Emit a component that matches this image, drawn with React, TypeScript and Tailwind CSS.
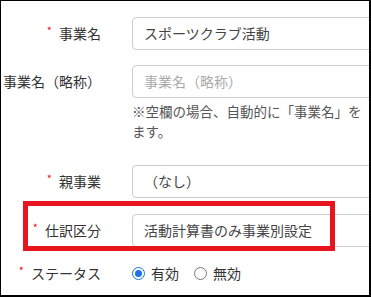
import React from "react";

const font = { fontFamily: '"Noto Sans CJK JP", "Noto Sans", sans-serif' };

function Req() {
  return <span className="text-[#e8141e] text-[11px] leading-none mr-[7px] relative top-[-3px]">*</span>;
}

function Label({ req, children }: { req?: boolean; children: React.ReactNode }) {
  return (
    <div className="w-[100px] shrink-0 flex items-center justify-end text-[14px] text-[#333] whitespace-nowrap">
      {req && <Req />}
      <span>{children}</span>
    </div>
  );
}

function Input({ value, placeholder }: { value?: string; placeholder?: string }) {
  return (
    <div className="w-[280px] shrink-0 h-[33px] border border-[#ccc] rounded-[4px] flex items-center px-[11px] text-[14px] bg-white">
      {value ? <span className="text-[#444]">{value}</span> : <span className="text-[#aaa]">{placeholder}</span>}
    </div>
  );
}

export default function App() {
  return (
    <div style={font} className="relative w-[371px] h-[297px] overflow-hidden bg-white border-l border-t border-r-2 border-b-2 border-black">
      <div className="flex flex-col pt-[16px]">
        <div className="flex items-center gap-[31px]">
          <Label req>事業名</Label>
          <Input value="スポーツクラブ活動" />
        </div>
        <div className="flex items-start gap-[31px] mt-[15px]">
          <div className="h-[33px] flex items-center">
            <Label>事業名（略称）</Label>
          </div>
          <div className="flex flex-col">
            <Input placeholder="事業名（略称）" />
            <div className="text-[13.5px] leading-[20px] text-[#555] mt-[3px] w-[240px]">
              <div className="whitespace-nowrap">※空欄の場合、自動的に「事業名」を</div>
              <div>ます。</div>
            </div>
          </div>
        </div>
        <div className="flex items-center gap-[31px] mt-[24px]">
          <Label req>親事業</Label>
          <Input value="（なし）" />
        </div>
        <div className="flex items-center gap-[31px] mt-[16px]">
          <Label req>仕訳区分</Label>
          <Input value="活動計算書のみ事業別設定" />
        </div>
        <div className="flex items-center gap-[31px] mt-[16px]">
          <Label req>ステータス</Label>
          <div className="flex items-center text-[14px] text-[#333]">
            <span className="w-[13px] h-[13px] rounded-full border border-[#1a73e8] flex items-center justify-center">
              <span className="w-[7px] h-[7px] rounded-full bg-[#1a73e8]" />
            </span>
            <span className="ml-[6px]">有効</span>
            <span className="ml-[15px] w-[13px] h-[13px] rounded-full border border-[#777]" />
            <span className="ml-[6px]">無効</span>
          </div>
        </div>
      </div>
      <div className="absolute left-[22px] top-[200px] w-[312px] h-[50px] border-[5px] border-[#e8141e]" />
    </div>
  );
}
